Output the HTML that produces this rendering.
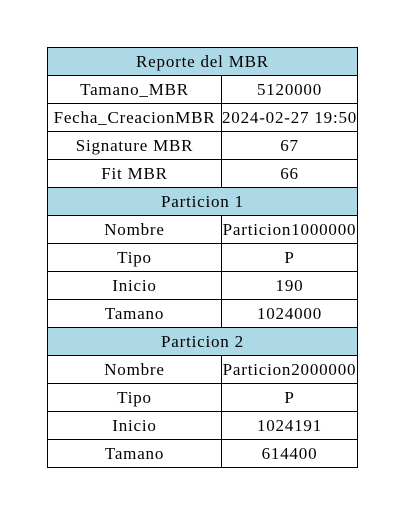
<!DOCTYPE html>
<html><head><style>
body{margin:0;width:405px;height:516px;background:#fff;position:relative;font-family:"Liberation Serif",serif;font-size:17px;letter-spacing:0.8px;color:#000}
.r{position:absolute;left:47px;width:311px;height:28px;border:1px solid #000;box-sizing:border-box;}
.c{position:absolute;top:0;height:26px;line-height:27px;text-align:center;white-space:nowrap}
.h{background:#add8e6}
</style></head><body>
<div id="t"></div>
<script>
var rows=[["Reporte del MBR"],["Tamano_MBR","5120000"],["Fecha_CreacionMBR","2024-02-27 19:50"],["Signature MBR","67"],["Fit MBR","66"],["Particion 1"],["Nombre","Particion1000000"],["Tipo","P"],["Inicio","190"],["Tamano","1024000"],["Particion 2"],["Nombre","Particion2000000"],["Tipo","P"],["Inicio","1024191"],["Tamano","614400"]];
var h="";
rows.forEach(function(r,i){
var y=47+28*i;
if(r.length==1){h+='<div class="r h" style="top:'+y+'px;height:29px"><div class="c" style="left:0;width:309px;height:27px">'+r[0]+'</div></div>';}
else{h+='<div class="r" style="top:'+y+'px;height:29px"><div class="c" style="left:0;width:173px">'+r[0]+'</div><div style="position:absolute;left:173px;top:0;width:1px;height:27px;background:#000"></div><div class="c" style="left:174px;width:135px">'+r[1]+'</div></div>';}
});
document.getElementById("t").innerHTML=h;
</script>
</body></html>
